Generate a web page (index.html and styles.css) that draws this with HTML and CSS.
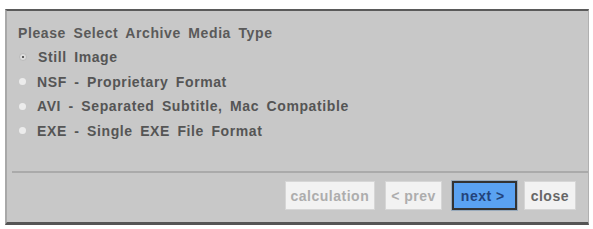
FILE: index.html
```html
<!DOCTYPE html>
<html lang="en">
<head>
  <meta charset="UTF-8" />
  <title>Archive Media Type</title>
  <link rel="stylesheet" href="styles.css">
</head>
<body>
  <div class="dialog">
    <div class="content">
      <h3 class="title">Please Select Archive Media Type</h3>
      <label class="option"><span class="radio checked"></span>Still Image</label>
      <label class="option"><span class="radio"></span>NSF - Proprietary Format</label>
      <label class="option"><span class="radio"></span>AVI - Separated Subtitle, Mac Compatible</label>
      <label class="option"><span class="radio"></span>EXE - Single EXE File Format</label>
    </div>
    <div class="footer">
      <button class="button disabled">calculation</button>
      <button class="button disabled">&lt; prev</button>
      <button class="button primary">next &gt;</button>
      <button class="button close">close</button>
    </div>
  </div>
</body>
</html>
```

FILE: styles.css
```css
body {
  margin: 0;
  background: #fff;
  font-family: "Liberation Sans", Arial, sans-serif;
}
.dialog {
  margin: 9px 4px 0 5px;
  height: 211px;
  background: #c8c8c8;
  border-top: 2px solid #5a5a5a;
  border-bottom: 3px solid #555;
  border-left: 2px solid #a8a8a8;
  border-right: 1px solid #b0b0b0;
  display: flex;
  flex-direction: column;
}
.content {
  padding: 14px 0 0 6px;
  height: 146px;
  border-bottom: 2px solid #aaa;
  margin-left: 5px;
}
.title {
  margin: 0 0 4px 0;
  font-size: 14px;
  font-weight: bold;
  color: #5a5a5a;
  word-spacing: 3px;
  letter-spacing: 0.6px;
}
.option {
  display: flex;
  align-items: center;
  height: 24.5px;
  font-size: 14px;
  font-weight: bold;
  color: #555;
  word-spacing: 3px;
  letter-spacing: 0.6px;
}
.radio {
  width: 7px;
  height: 7px;
  border-radius: 50%;
  background: #ececec;
  margin: 0 11px 0 1px;
  position: relative;
}
.radio.checked {
  background: #ddd;
  border: 1px solid #bbb;
  width: 6px;
  height: 6px;
}
.radio.checked::after {
  content: "";
  position: absolute;
  left: 2px;
  top: 2px;
  width: 2px;
  height: 2px;
  border-radius: 50%;
  background: #333;
}
.footer {
  display: flex;
  justify-content: flex-end;
  align-items: center;
  padding: 8px 12px 0 0;
}
.button {
  font-family: "Liberation Sans", Arial, sans-serif;
  font-size: 14px;
  font-weight: bold;
  height: 29px;
  padding: 0 5px;
  margin-left: 10px;
  background: #f2f2f2;
  color: #666;
  border: 1px solid #d6d6d6;
  letter-spacing: 0.5px;
}
.button.disabled {
  color: #adadad;
}
.button.primary {
  background: #5aa2f2;
  color: #23437a;
  border: 2px solid #333;
  outline: 1px solid #9ab;
  padding: 0 10px 0 7px;
}
.button.close {
  margin-left: 7px;
  padding: 0 6px;
}
```
